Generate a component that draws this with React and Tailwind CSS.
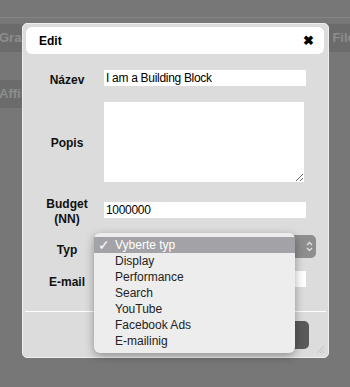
import React from "react";

export default function App() {
  const items = ["Display", "Performance", "Search", "YouTube", "Facebook Ads", "E-mailinig"];
  return (
    <div
      className="relative w-[350px] h-[387px] overflow-hidden bg-[#777777]"
      style={{ fontFamily: '"Liberation Sans", Arial, sans-serif' }}
    >
      {/* background page */}
      <div className="h-[17px]" />
      <div className="h-px bg-[#858585]" />
      <div className="h-[6px]" />
      <div className="h-[28px] bg-[#6b6b6b] flex items-center justify-between text-[13px] font-bold text-[#8d8d8d]">
        <span className="-ml-px">Grafika</span>
        <span className="mr-[-12px]">Files</span>
      </div>
      <div className="h-[28px]" />
      <div className="h-[28px] w-[60px] bg-[#6b6b6b] flex items-center text-[13px] font-bold text-[#8d8d8d]">
        <span className="-ml-px">Affiliate</span>
      </div>

      {/* dialog */}
      <div className="absolute left-[22px] top-[23px] w-[307px] h-[335px] bg-[#dcdcdc] rounded-[5px] border border-[#eeeeee] flex flex-col">
        <div className="mx-[3px] mt-[3px] w-[298px] h-[27px] bg-white rounded-[6px] flex items-center justify-between pl-[13px] pr-[10px]">
          <span className="text-[12px] font-bold text-black">Edit</span>
          <span className="text-[13px] font-bold text-black leading-none">✖</span>
        </div>

        <div className="pl-[7px] flex flex-col">
          <div className="mt-[16px] flex items-start">
            <div className="w-[74px] text-center text-[12px] font-bold leading-[16px] pt-[2px] text-[#111]">Název</div>
            <div className="w-[202px] h-[16px] bg-white text-[12px] leading-[16px] px-[2px] tracking-[-0.3px] text-black">I am a Building Block</div>
          </div>
          <div className="mt-[14px] flex items-start">
            <div className="w-[74px] text-center text-[12px] font-bold leading-[16px] pt-[33px] text-[#111]">Popis</div>
            <textarea className="w-[200px] h-[80px] bg-white border-0 outline-none p-0 block" defaultValue="" />
          </div>
          <div className="mt-[20px] flex items-start">
            <div className="w-[74px] text-center text-[12px] font-bold leading-[15px] -mt-[5px] text-[#111]">
              Budget
              <br />
              (NN)
            </div>
            <div className="w-[202px] h-[16px] bg-white text-[12px] leading-[16px] px-[2px] tracking-[-0.3px] text-black">1000000</div>
          </div>
          <div className="mt-[8px] flex items-start">
            <div className="w-[74px] text-center text-[12px] font-bold leading-[16px] pt-[7px] text-[#111]">Typ</div>
            <div className="w-[212px] h-[23px] bg-[#8e8e8e] rounded-[5px] flex items-center justify-end pr-[3px]">
              <svg width="7" height="11" viewBox="0 0 7 11" fill="none" stroke="#e0e0e0" strokeWidth="1.3">
                <path d="M1 4 L3.5 1.5 L6 4" />
                <path d="M1 7 L3.5 9.5 L6 7" />
              </svg>
            </div>
          </div>
          <div className="mt-[13px] flex items-start">
            <div className="w-[74px] text-center text-[12px] font-bold leading-[16px] pt-[3px] text-[#111]">E-mail</div>
            <div className="w-[202px] h-[16px] bg-white" />
          </div>
        </div>

        <div className="mx-[2px] mt-[21px] h-px bg-white" />
        <div className="flex justify-end pr-[19px] pt-[9px]">
          <div className="w-[66px] h-[28px] rounded-[5px] bg-[#5a5a5a] flex items-center justify-center text-[13px] font-bold text-[#cfcfcf]">
            Uložit
          </div>
        </div>
        <svg className="absolute right-[3px] bottom-[3px]" width="9" height="9" viewBox="0 0 9 9" stroke="#bdbdbd" strokeWidth="0.8">
          <path d="M1 8 L8 1" />
          <path d="M4 8 L8 4" />
          <path d="M7 8 L8 7" />
        </svg>
      </div>

      {/* open select menu */}
      <div
        className="absolute left-[94px] top-[233px] w-[201px] h-[120px] rounded-[6px] bg-[#ededed] shadow-[0_3px_10px_rgba(0,0,0,0.35)] py-[4px] text-[12px]"
        style={{ fontFamily: '"Liberation Sans", Arial, sans-serif' }}
      >
        <div className="h-[16px] bg-[#a3a3a7] flex items-center text-white">
          <span className="w-[21px] pl-[4px] text-[14px] leading-none">✓</span>
          <span>Vyberte typ</span>
        </div>
        {items.map((t) => (
          <div key={t} className="h-[16px] flex items-center pl-[21px] text-[#222222]">
            {t}
          </div>
        ))}
      </div>
    </div>
  );
}
